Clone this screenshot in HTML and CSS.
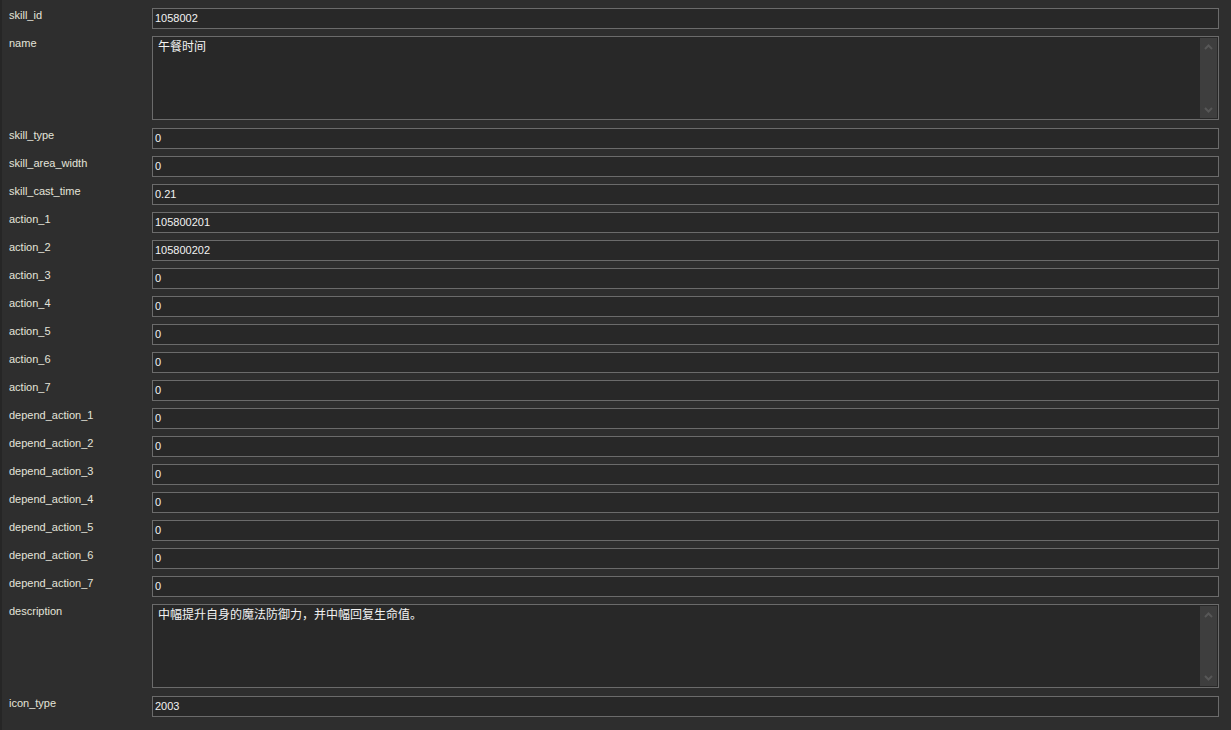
FILE: index.html
```html
<!DOCTYPE html>
<html>
<head>
<meta charset="utf-8">
<link rel="stylesheet" href="styles.css">
</head>
<body>
<div class="form">
  <div class="row"><div class="label">skill_id</div><div class="field">1058002</div></div>
  <div class="row tall"><div class="label">name</div>
    <div class="area"><div class="area-text">午餐时间</div>
      <div class="sbar"><svg class="chev" width="9" height="6" viewBox="0 0 9 6"><path d="M1 5 L4.5 1.5 L8 5" fill="none" stroke="#575757" stroke-width="2"/></svg><svg class="chev" width="9" height="6" viewBox="0 0 9 6"><path d="M1 1 L4.5 4.5 L8 1" fill="none" stroke="#575757" stroke-width="2"/></svg></div>
    </div>
  </div>
  <div class="row"><div class="label">skill_type</div><div class="field">0</div></div>
  <div class="row"><div class="label">skill_area_width</div><div class="field">0</div></div>
  <div class="row"><div class="label">skill_cast_time</div><div class="field">0.21</div></div>
  <div class="row"><div class="label">action_1</div><div class="field">105800201</div></div>
  <div class="row"><div class="label">action_2</div><div class="field">105800202</div></div>
  <div class="row"><div class="label">action_3</div><div class="field">0</div></div>
  <div class="row"><div class="label">action_4</div><div class="field">0</div></div>
  <div class="row"><div class="label">action_5</div><div class="field">0</div></div>
  <div class="row"><div class="label">action_6</div><div class="field">0</div></div>
  <div class="row"><div class="label">action_7</div><div class="field">0</div></div>
  <div class="row"><div class="label">depend_action_1</div><div class="field">0</div></div>
  <div class="row"><div class="label">depend_action_2</div><div class="field">0</div></div>
  <div class="row"><div class="label">depend_action_3</div><div class="field">0</div></div>
  <div class="row"><div class="label">depend_action_4</div><div class="field">0</div></div>
  <div class="row"><div class="label">depend_action_5</div><div class="field">0</div></div>
  <div class="row"><div class="label">depend_action_6</div><div class="field">0</div></div>
  <div class="row"><div class="label">depend_action_7</div><div class="field">0</div></div>
  <div class="row tall"><div class="label">description</div>
    <div class="area"><div class="area-text">中幅提升自身的魔法防御力，并中幅回复生命值。</div>
      <div class="sbar"><svg class="chev" width="9" height="6" viewBox="0 0 9 6"><path d="M1 5 L4.5 1.5 L8 5" fill="none" stroke="#575757" stroke-width="2"/></svg><svg class="chev" width="9" height="6" viewBox="0 0 9 6"><path d="M1 1 L4.5 4.5 L8 1" fill="none" stroke="#575757" stroke-width="2"/></svg></div>
    </div>
  </div>
  <div class="row"><div class="label">icon_type</div><div class="field">2003</div></div>
</div>
</body>
</html>
```
FILE: styles.css
```css
html, body {
  margin: 0;
  padding: 0;
  background: #2e2e2e;
  height: 100%;
}
body {
  font-family: "Liberation Sans", Arial, "Noto Sans CJK SC", sans-serif;
  font-size: 11px;
  overflow: hidden;
}
.form {
  border-left: 2px solid #262626;
  min-height: 730px;
  box-sizing: border-box;
  padding: 8px 12px 0 7px;
  display: flex;
  flex-direction: column;
}
.row {
  display: flex;
  align-items: flex-start;
  height: 28px;
}
.row.tall {
  height: 92px;
}
.label {
  width: 143px;
  color: #e4e4da;
  padding-top: 1px;
  line-height: 13px;
}
.field {
  flex: 1;
  height: 21px;
  box-sizing: border-box;
  border: 1px solid #6b6b6b;
  background: #282828;
  color: #f2f2f2;
  padding: 0 2px;
  line-height: 19px;
  font-family: "Liberation Sans", Arial, sans-serif;
}
.area {
  flex: 1;
  height: 84px;
  box-sizing: border-box;
  border: 1px solid #6b6b6b;
  background: #282828;
  display: flex;
}
.area-text {
  flex: 1;
  color: #f2f2f2;
  font-family: "Noto Sans CJK SC", sans-serif;
  font-size: 12px;
  line-height: 16px;
  padding: 1px 5px;
}
.sbar {
  width: 17px;
  margin: 1px;
  background: #3e3e3e;
  display: flex;
  flex-direction: column;
  justify-content: space-between;
  align-items: center;
  padding: 6px 0 5px;
  box-sizing: border-box;
}
.chev {
  display: block;
}
```
